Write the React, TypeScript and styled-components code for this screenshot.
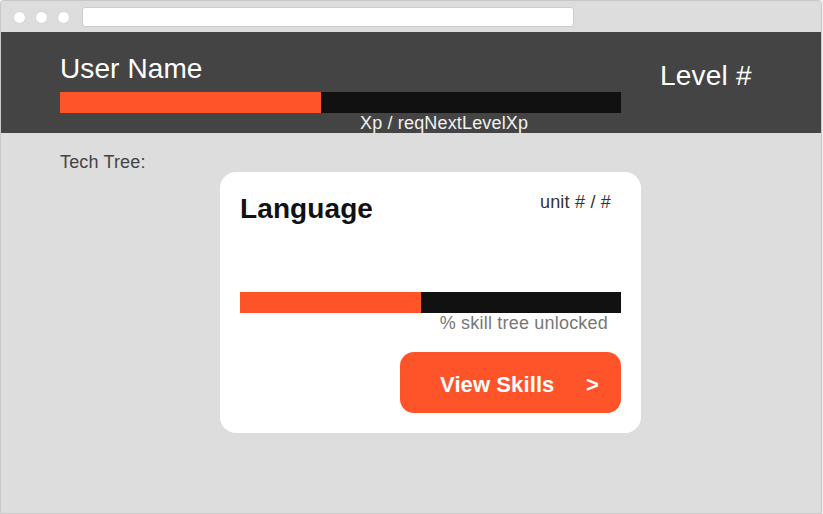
import React from "react";
import styled, { createGlobalStyle } from "styled-components";

const GlobalStyle = createGlobalStyle`
  html, body { margin: 0; padding: 0; background: #efefef; }
  body { font-family: "Liberation Sans", Arial, sans-serif; }
  * { box-sizing: border-box; }
`;

const ORANGE = "#ff5429";

const Frame = styled.div`
  width: 822px;
  height: 514px;
  border: 1px solid #c9c9c9;
  border-radius: 4px 4px 0 0;
  background: #dddddd;
  display: flex;
  flex-direction: column;
  overflow: hidden;
`;

const Chrome = styled.div`
  height: 31px;
  flex: none;
  display: flex;
  align-items: flex-start;
  padding: 9px 0 0 12px;
  gap: 9px;
  background: #dddddd;
`;

const Dot = styled.span`
  width: 13px;
  height: 13px;
  margin-top: 0.5px;
  border-radius: 50%;
  background: #ffffff;
  border: 1px solid #d4d4d4;
  flex: none;
`;

const AddressBar = styled.div`
  width: 492px;
  height: 20px;
  margin-top: -3px;
  margin-left: 3px;
  background: #ffffff;
  border: 1px solid #cccccc;
  border-radius: 3px;
`;

const Header = styled.header`
  height: 101px;
  flex: none;
  background: #444444;
  display: flex;
  padding-left: 59px;
  gap: 39px;
`;

const PlayerColumn = styled.div`
  width: 561px;
  display: flex;
  flex-direction: column;
`;

const UserName = styled.div`
  margin-top: 21px;
  font-size: 28px;
  line-height: 32px;
  letter-spacing: 0.1px;
  color: #ffffff;
`;

const Bar = styled.div<{ $gap: number }>`
  margin-top: ${(p) => p.$gap}px;
  height: 21px;
  background: #111111;
  display: flex;
`;

const Fill = styled.div`
  height: 100%;
  background: ${ORANGE};
`;

const XpText = styled.div`
  padding-left: 300px;
  font-size: 18px;
  line-height: 20px;
  letter-spacing: 0.16px;
  color: #f2f2f2;
  white-space: nowrap;
`;

const Level = styled.div`
  margin-top: 28px;
  font-size: 28px;
  line-height: 32px;
  letter-spacing: 0.2px;
  color: #ffffff;
  white-space: nowrap;
`;

const Main = styled.main`
  flex: 1;
  padding: 18px 0 0 59px;
  display: flex;
  flex-direction: column;
`;

const SectionLabel = styled.div`
  font-size: 18px;
  line-height: 20px;
  letter-spacing: 0.15px;
  color: #444444;
  margin-top: 1px;
`;

const Card = styled.section`
  margin-left: 160px;
  width: 421px;
  height: 261px;
  background: #ffffff;
  border-radius: 16px;
  padding: 21px 20px 20px 20px;
  display: flex;
  flex-direction: column;
`;

const CardHead = styled.div`
  display: flex;
  justify-content: space-between;
  align-items: flex-start;
  height: 32px;
`;

const Title = styled.h2`
  margin: 0;
  font-size: 28px;
  line-height: 32px;
  font-weight: 700;
  letter-spacing: 0.1px;
  color: #111111;
`;

const Units = styled.div`
  font-size: 18px;
  line-height: 18px;
  letter-spacing: 0.2px;
  color: #333333;
  margin-right: 10px;
`;

const Caption = styled.div`
  text-align: right;
  padding-right: 13px;
  font-size: 18px;
  line-height: 21px;
  letter-spacing: 0.2px;
  color: #777777;
`;

const ButtonRow = styled.div`
  display: flex;
  justify-content: flex-end;
  margin-top: 18px;
`;

const ViewButton = styled.button`
  width: 221px;
  height: 61px;
  border: none;
  border-radius: 14px;
  background: ${ORANGE};
  color: #ffffff;
  font-family: "Liberation Sans", Arial, sans-serif;
  font-weight: 700;
  font-size: 22px;
  line-height: 24px;
  letter-spacing: 0.1px;
  padding: 5px 22px 0 40px;
  display: flex;
  align-items: center;
  justify-content: space-between;
  cursor: pointer;
`;

export default function App() {
  const xpPct = (261 / 561) * 100;
  const treePct = (181 / 381) * 100;
  return (
    <>
      <GlobalStyle />
      <Frame>
        <Chrome>
          <Dot />
          <Dot />
          <Dot />
          <AddressBar />
        </Chrome>
        <Header>
          <PlayerColumn>
            <UserName>User Name</UserName>
            <Bar $gap={7}>
              <Fill style={{ width: `${xpPct}%` }} />
            </Bar>
            <XpText>Xp / reqNextLevelXp</XpText>
          </PlayerColumn>
          <Level>Level #</Level>
        </Header>
        <Main>
          <SectionLabel>Tech Tree:</SectionLabel>
          <Card>
            <CardHead>
              <Title>Language</Title>
              <Units>unit # / #</Units>
            </CardHead>
            <Bar $gap={67}>
              <Fill style={{ width: `${treePct}%` }} />
            </Bar>
            <Caption>% skill tree unlocked</Caption>
            <ButtonRow>
              <ViewButton>
                <span>View Skills</span>
                <span>&gt;</span>
              </ViewButton>
            </ButtonRow>
          </Card>
        </Main>
      </Frame>
    </>
  );
}
